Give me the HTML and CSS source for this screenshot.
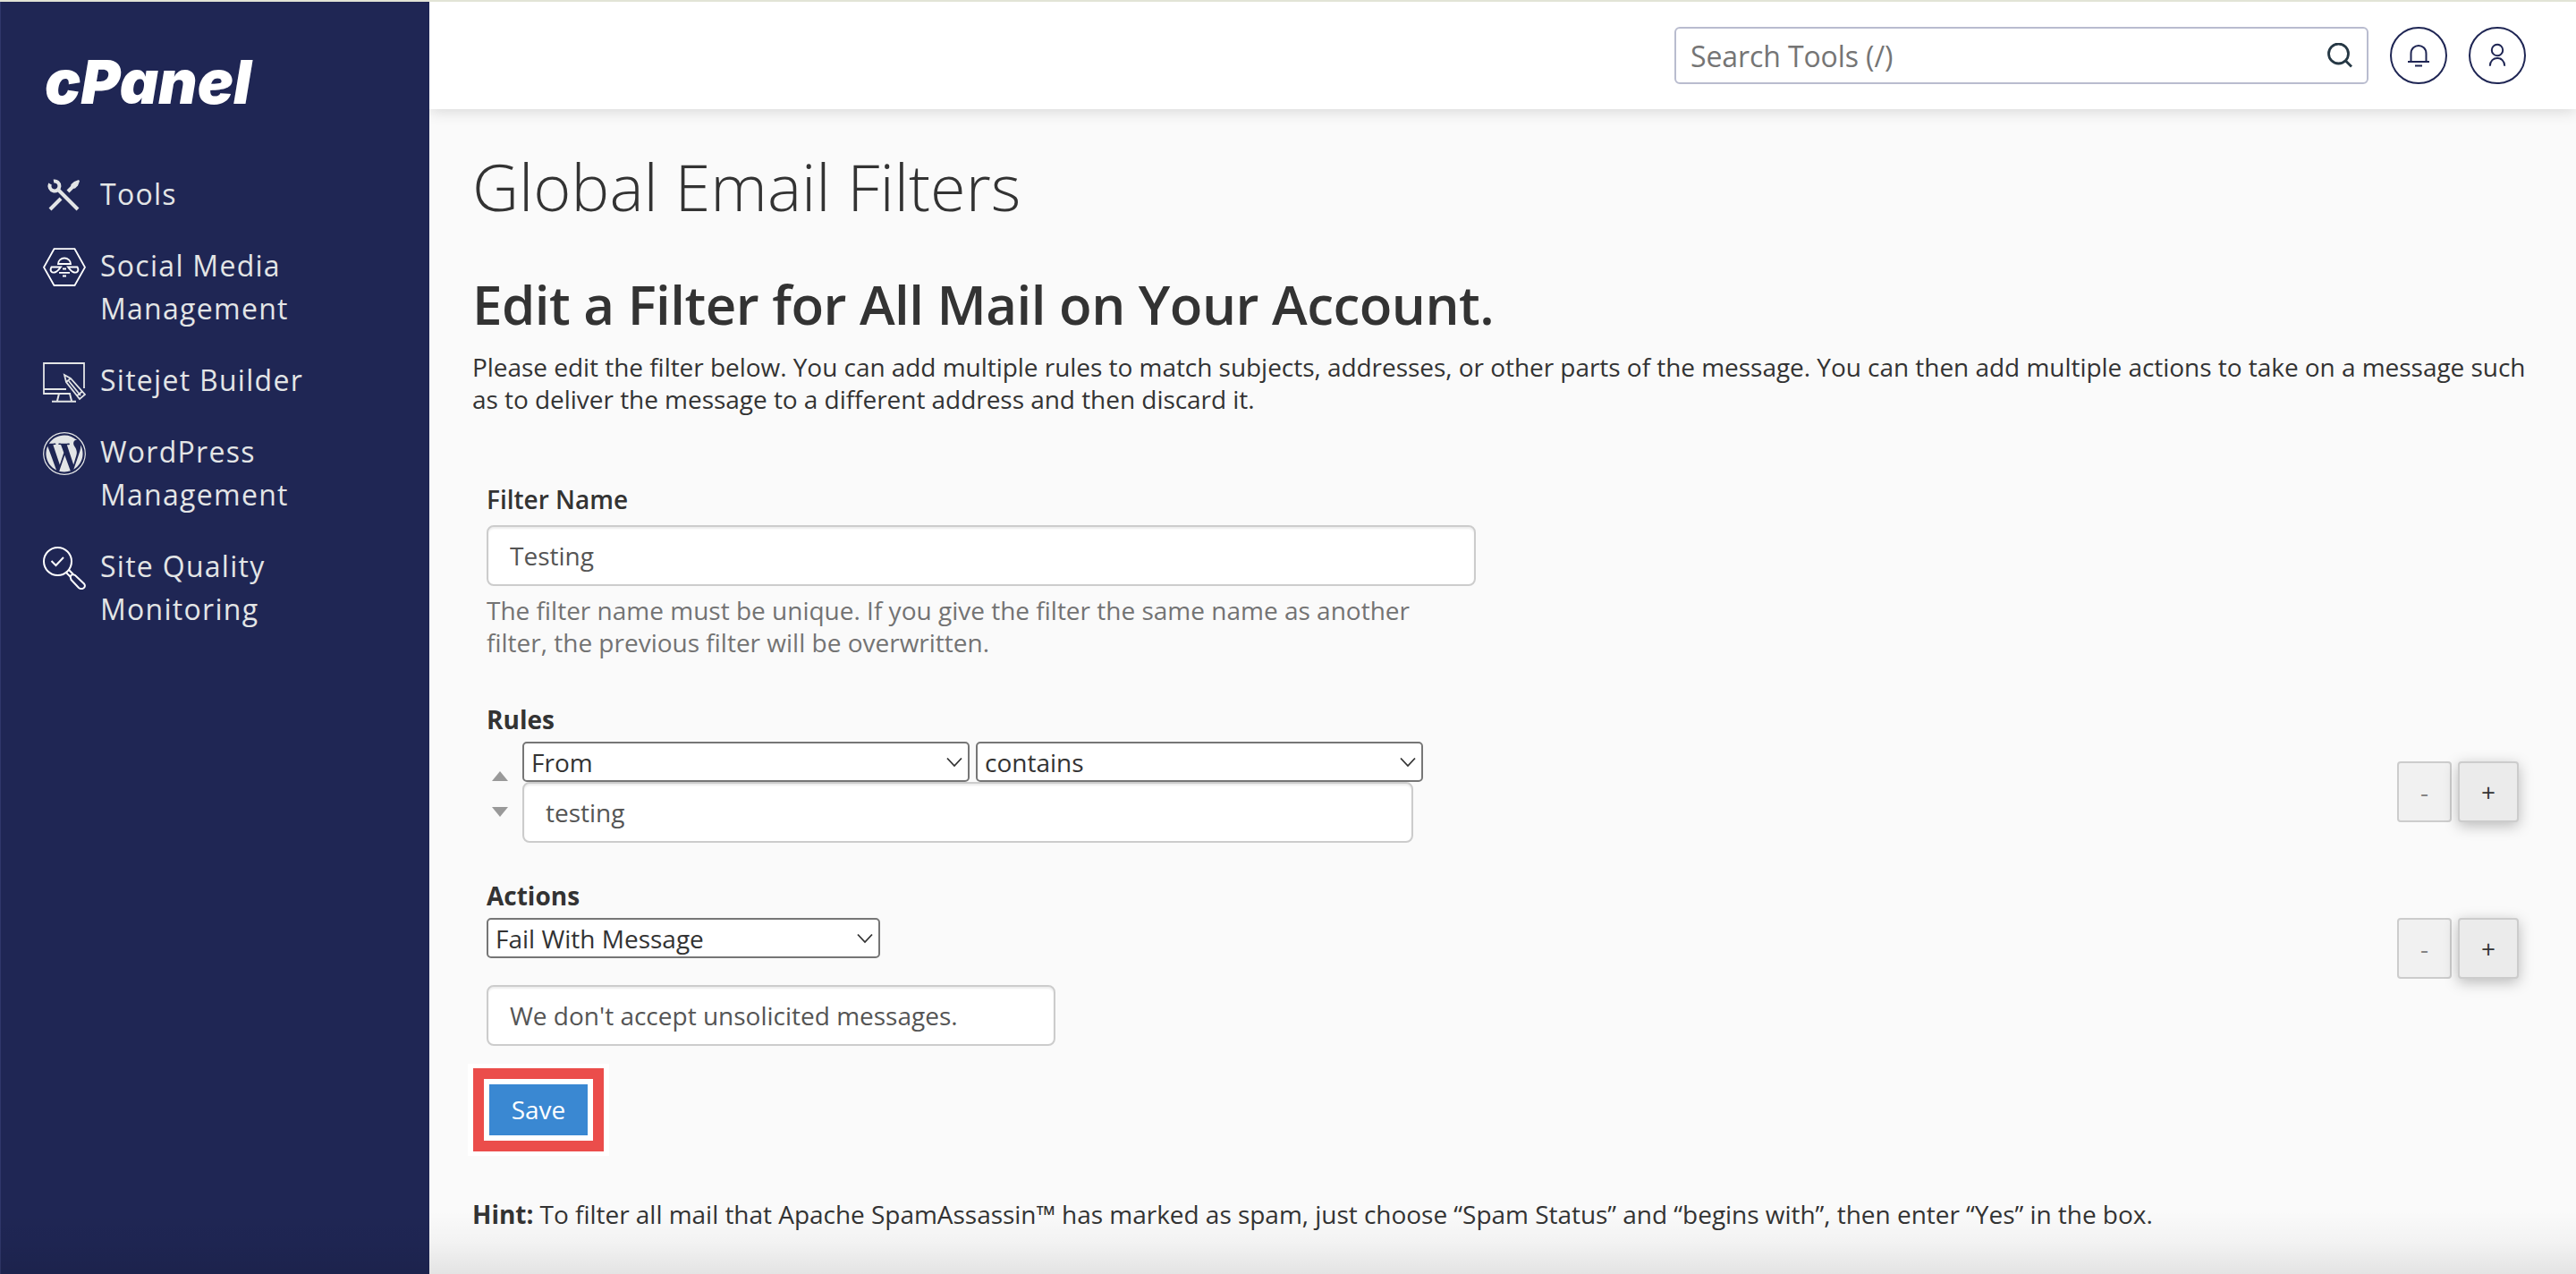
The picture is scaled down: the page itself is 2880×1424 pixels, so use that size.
FILE: index.html
```html
<!DOCTYPE html>
<html lang="en">
<head>
    <meta charset="UTF-8">
    <meta name="viewport" content="width=device-width, initial-scale=1.0">
    <title>cPanel - Global Email Filters</title>
    <link rel="stylesheet" href="styles.css">
</head>
<body>
    <aside class="sidebar">
        <a class="logo" href="#" aria-label="cPanel">
            <svg width="280" height="90" viewBox="0 0 280 90">
                <text class="logo-text" x="2" y="70" textLength="231" lengthAdjust="spacingAndGlyphs">cPanel</text>
            </svg>
        </a>
        <nav>
            <ul class="menu">
                <li>
                    <svg class="menu-icon" viewBox="0 0 48 48" fill="none" stroke="#e3e5e6" stroke-width="4">
                        <path d="M17 17 L39 39"/>
                        <path d="M8 39 L20 27"/>
                        <path d="M8 10.500 A5.500 5.500 0 1 0 12 7.500"/>
                        <path d="M28 19 L33 14"/>
                        <path d="M31 14 L31.500 11 L35 8 L40 6 L41 7.500 L39 12.500 L36 15.500 L33 16Z" fill="#e3e5e6" stroke="none"/>
                    </svg>
                    <span>Tools</span>
                </li>
                <li>
                    <svg class="menu-icon" viewBox="0 0 48 48" fill="none" stroke="#fff" stroke-width="1.800">
                        <path d="M12.500 3.200 H35.500 L47 23.700 L35.500 44 H12.500 L1 23.700Z"/>
                        <path d="M17 20 A7 6.500 0 0 1 31 20Z"/>
                        <path d="M20 23.500 H9.500 C7 28 10 30 13 29.500 C16 29 18 26 20 23.500Z"/>
                        <path d="M28 23.500 H38.500 C41 28 38 30 35 29.500 C32 29 30 26 28 23.500Z"/>
                        <path d="M22 25.500 H26 M18 29.800 H30 M22 33.500 H26"/>
                    </svg>
                    <span>Social Media Management</span>
                </li>
                <li>
                    <svg class="menu-icon" viewBox="0 0 48 48" fill="none" stroke="#e3e5e6" stroke-width="1.800">
                        <path d="M46 31 V3 H1 V37 H31 M1 32 H26"/>
                        <path d="M18 37 L16 45 M30 37 L32 45 M10 45.800 H37" stroke-width="2"/>
                        <path d="M24 16 L26 24 L41 43 L47 38 L31 20Z M26 24 L31 20 M38.500 39 L44 34.500 M29 23 L42 39"/>
                    </svg>
                    <span>Sitejet Builder</span>
                </li>
                <li>
                    <svg class="menu-icon" viewBox="0 0 48 48">
                        <circle cx="24" cy="24" r="23.300" fill="none" stroke="#e3e5e6" stroke-width="1.200"/>
                        <path transform="translate(1.200 1.200) scale(1.900)" fill="#e3e5e6" d="M21.469 6.825c.84 1.537 1.318 3.300 1.318 5.175 0 3.979-2.156 7.456-5.363 9.325l3.295-9.527c.615-1.540.820-2.771.820-3.864 0-.405-.026-.780-.070-1.110m-7.981.105c.647-.030 1.232-.105 1.232-.105.582-.075.514-.930-.067-.899 0 0-1.755.135-2.880.135-1.064 0-2.850-.150-2.850-.150-.585-.030-.661.855-.075.885 0 0 .540.061 1.125.090l1.680 4.605-2.370 7.080L5.354 6.900c.649-.030 1.234-.100 1.234-.100.585-.075.516-.930-.065-.896 0 0-1.746.138-2.874.138-.200 0-.438-.008-.690-.015C4.911 3.150 8.235 1.215 12 1.215c2.809 0 5.365 1.072 7.286 2.833-.046-.003-.091-.009-.141-.009-1.060 0-1.812.923-1.812 1.914 0 .890.513 1.643 1.060 2.531.411.720.890 1.643.890 2.977 0 .915-.354 1.994-.821 3.479l-1.075 3.585-3.900-11.610zM12 22.784c-1.059 0-2.081-.153-3.048-.437l3.237-9.406 3.315 9.087c.024.053.050.101.078.149-1.120.393-2.325.609-3.582.609M1.211 12c0-1.564.336-3.050.935-4.390L7.290 21.709C3.694 19.960 1.212 16.271 1.211 12"/>
                    </svg>
                    <span>WordPress Management</span>
                </li>
                <li>
                    <svg class="menu-icon" viewBox="0 0 48 48" fill="none" stroke="#fff" stroke-width="2">
                        <circle cx="16.500" cy="16.500" r="15.500"/>
                        <path d="M9.500 16 L14.500 21 L23 12"/>
                        <path d="M26 29 L31 34 M29 26 L34 31"/>
                        <path d="M31 35 C30 32 33 30 36 32 L46 41.500 C49 45 44 49 40 46 L31.500 37Z"/>
                    </svg>
                    <span>Site Quality Monitoring</span>
                </li>
            </ul>
        </nav>
    </aside>

    <div class="main">
        <header class="topbar">
            <div class="search-box">
                <input class="search-input" type="text" placeholder="Search Tools (/)">
                <svg class="search-icon" viewBox="0 0 28 28" fill="none" stroke="#263845" stroke-width="2.800">
                    <circle cx="12.500" cy="12" r="11"/>
                    <path d="M20 19.500 L27 26.500"/>
                </svg>
            </div>
            <button class="round-btn" aria-label="Notifications">
                <svg viewBox="0 0 64 64" fill="none" stroke="#1f2654" stroke-width="2">
                    <path d="M23.500 38 V30 C23.500 18 40.500 18 40.500 30 V38 M20 39 H44 M28 43.500 H36"/>
                </svg>
            </button>
            <button class="round-btn" aria-label="Account">
                <svg viewBox="0 0 64 64" fill="none" stroke="#1f2654" stroke-width="2">
                    <circle cx="32" cy="26" r="6.200"/>
                    <path d="M23.800 43.700 C24 32 40 32 40.200 43.700"/>
                </svg>
            </button>
        </header>

        <main class="content">
            <h1>Global Email Filters</h1>
            <h2>Edit a Filter for All Mail on Your Account.</h2>
            <p class="intro">Please edit the filter below. You can add multiple rules to match subjects, addresses, or other parts of the message. You can then add multiple actions to take on a message such as to deliver the message to a different address and then discard it.</p>

            <form class="filter-form">
                <label for="filterName">Filter Name</label>
                <input class="form-control name-input" id="filterName" type="text" value="Testing">
                <p class="help">The filter name must be unique. If you give the filter the same name as another filter, the previous filter will be overwritten.</p>

                <h3 class="rules-title">Rules</h3>
                <div class="row">
                    <div class="arrows">
                        <span class="arrow-up"></span>
                        <span class="arrow-down"></span>
                    </div>
                    <div class="rule-fields">
                        <div class="selects">
                            <div class="select rule-select">
                                <span>From</span>
                                <svg class="chevron" viewBox="0 0 18 12"><path d="M1 1.500 L9 10 L17 1.500"/></svg>
                            </div>
                            <div class="select rule-select">
                                <span>contains</span>
                                <svg class="chevron" viewBox="0 0 18 12"><path d="M1 1.500 L9 10 L17 1.500"/></svg>
                            </div>
                        </div>
                        <input class="form-control rule-input" type="text" value="testing">
                    </div>
                    <div class="row-buttons rule-buttons">
                        <button class="btn btn-minus" type="button" disabled>-</button>
                        <button class="btn btn-plus" type="button">+</button>
                    </div>
                </div>

                <h3 class="actions-title">Actions</h3>
                <div class="row">
                    <div class="action-fields">
                        <div class="select action-select">
                            <span>Fail With Message</span>
                            <svg class="chevron" viewBox="0 0 18 12"><path d="M1 1.500 L9 10 L17 1.500"/></svg>
                        </div>
                        <input class="form-control action-input" type="text" value="We don't accept unsolicited messages.">
                    </div>
                    <div class="row-buttons">
                        <button class="btn btn-minus" type="button" disabled>-</button>
                        <button class="btn btn-plus" type="button">+</button>
                    </div>
                </div>
            </form>

            <div class="save-frame">
                <button class="save-btn" type="button">Save</button>
            </div>

            <p class="hint"><strong>Hint:</strong> To filter all mail that Apache SpamAssassin™ has marked as spam, just choose “Spam Status” and “begins with”, then enter “Yes” in the box.</p>
        </main>
    </div>
    <div class="bottom-fade"></div>
</body>
</html>
```
FILE: styles.css
```css
* { box-sizing: border-box; }
body { margin: 0; height: 1424px; display: flex; overflow: hidden; border-top: 2px solid #e2e4d6; background: #fafafa; color: #333; font-family: "Open Sans", sans-serif; font-size: 28px; line-height: 36px; }
input, button { font-family: inherit; }
h1, h2, h3, p { margin: 0; }

/* Sidebar */
.sidebar { width: 480px; flex: none; background: #1f2654; border-left: 1px solid #30376a; padding: 44px 0 0 47px; }
.logo { display: block; height: 90px; }
.logo svg { display: block; }
.logo-text { font-family: Inter, sans-serif; font-size: 68px; font-weight: 900; font-style: italic; fill: #fff; }
.menu { list-style: none; margin: 0; padding: 57px 0 0; display: flex; flex-direction: column; gap: 32px; }
.menu li { display: flex; gap: 16px; color: #e3e5e6; font-size: 32px; line-height: 48px; letter-spacing: 1.28px; }
.menu span { width: 270px; }
.menu-icon { width: 48px; height: 48px; flex: none; margin: 2px 0 -2px; }

/* Top bar */
.main { flex: 1; min-width: 0; }
.topbar { height: 120px; padding: 0 56px; display: flex; align-items: center; justify-content: flex-end; gap: 24px; background: #fff; box-shadow: 0 2px 16px rgba(0, 0, 0, 0.15); clip-path: inset(0 0 -24px 0); }
.search-box { width: 776px; height: 64px; display: flex; align-items: center; padding: 0 16px; background: #fff; border: 2px solid #b9bccf; border-radius: 6px; }
.search-input { flex: 1; border: 0; outline: none; padding: 0; font-size: 32px; letter-spacing: -0.1px; background: transparent; }
.search-input::placeholder { color: #757575; }
.search-icon { width: 28px; height: 28px; }
.round-btn { width: 64px; height: 64px; padding: 0; border: 2px solid #1f2654; border-radius: 50%; background: #fff; }
.round-btn svg { display: block; width: 64px; height: 64px; margin: -2px; }

/* Content */
.content { padding: 41px 48px 0; }
h1 { font-size: 72px; font-weight: 300; line-height: 90px; }
h2 { margin-top: 51px; font-size: 60px; font-weight: 600; line-height: 72px; letter-spacing: -0.52px; }
.intro { margin-top: 16px; letter-spacing: -0.04px; }
.filter-form { padding: 76px 16px 0; }
label { display: block; font-weight: 600; }
.form-control { display: block; height: 68px; padding: 0 24px; border: 2px solid #ccc; border-radius: 8px; background: #fff; color: #555; font-size: 28px; box-shadow: inset 0 2px 2px rgba(0, 0, 0, 0.075); outline: none; }
.name-input { width: 1106px; margin-top: 11px; }
.help { width: 1106px; margin-top: 9px; color: #737373; }
h3 { font-size: 28px; font-weight: 700; line-height: 36px; }
.rules-title { margin-top: 50px; }
.row { display: flex; margin-top: 7px; }
.arrows { width: 40px; padding: 33px 0 0 6px; display: flex; flex-direction: column; gap: 29px; }
.arrow-up { width: 0; border: 9px solid transparent; border-top: 0; border-bottom: 11px solid #999; }
.arrow-down { width: 0; border: 9px solid transparent; border-bottom: 0; border-top: 11px solid #999; }
.selects { display: flex; gap: 7px; }
.select { height: 45px; display: flex; align-items: center; justify-content: space-between; padding: 0 6px 0 8px; border: 2px solid #767676; border-radius: 5px; background: #fff; }
.rule-select { width: 500px; }
.chevron { width: 18px; height: 12px; fill: none; stroke: #333; stroke-width: 1.8; }
.rule-input { width: 996px; }
.row-buttons { margin-left: auto; display: flex; gap: 7px; }
.rule-buttons { padding-top: 22px; }
.btn { height: 68px; padding: 0; border: 2px solid #ccc; border-radius: 4px; background: #ebebeb; color: #333; font-size: 28px; }
.btn-minus { width: 61px; background: #f1f1f1; color: #848484; }
.btn-plus { width: 68px; box-shadow: 0 4px 16px rgba(0, 0, 0, 0.26); }
.actions-title { margin-top: 41px; }
.action-select { width: 440px; }
.action-input { width: 636px; margin-top: 30px; }

/* Save button */
.save-frame { width: 158px; height: 103px; margin: 20px 0 0 -5px; display: flex; padding: 5px 6px; background: #fff; }
.save-btn { flex: 1; border: 12px solid #eb4d4b; padding: 0 0 2px; background: #3a88d2; box-shadow: inset 0 0 0 6px #fff; color: #fff; font-size: 28px; }
.hint { margin-top: 47px; letter-spacing: -0.03px; }

/* Shade along the bottom edge of the window */
.bottom-fade { position: absolute; left: 0; right: 0; bottom: 0; height: 70px; background: linear-gradient(rgba(0, 0, 0, 0), rgba(0, 0, 0, 0.03) 50%, rgba(0, 0, 0, 0.09)); pointer-events: none; }
```
